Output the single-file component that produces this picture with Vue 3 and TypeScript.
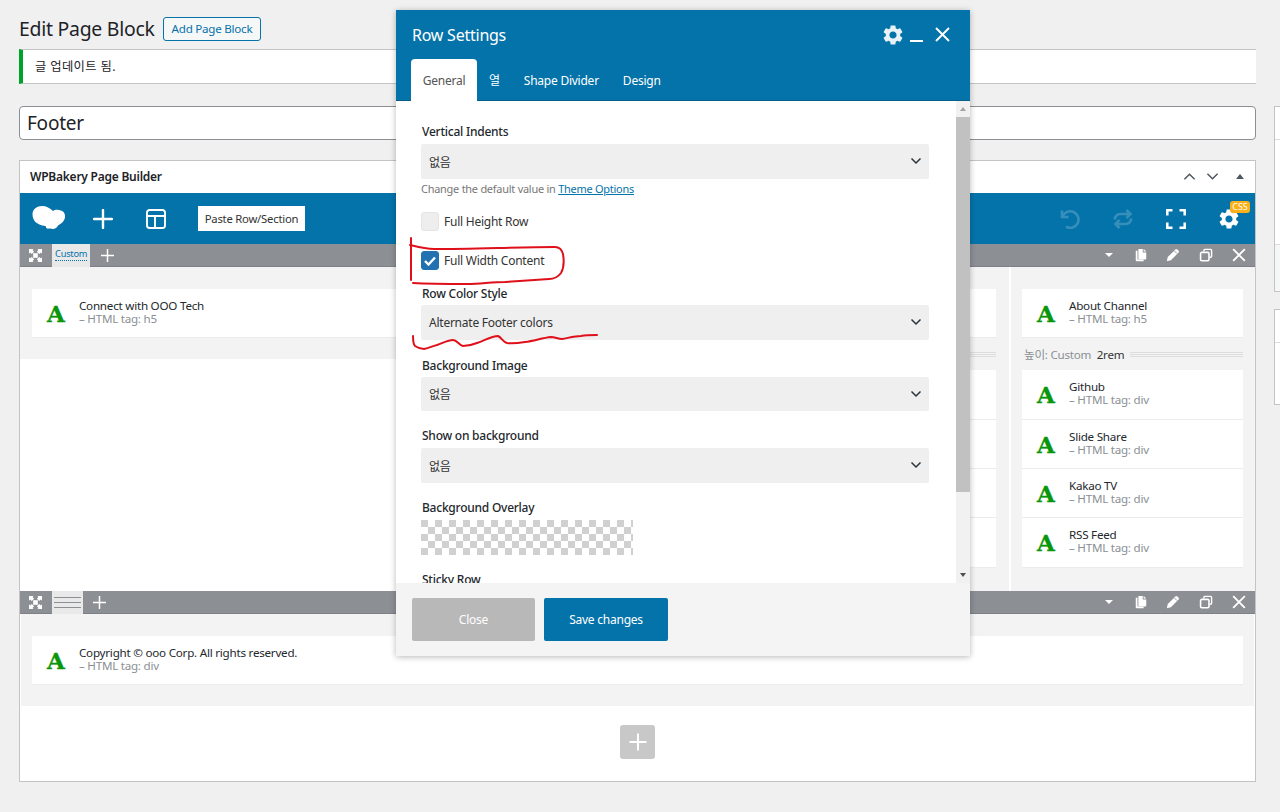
<script setup lang="ts">
interface Item { title: string; tag: string }
const rightTop: Item = { title: 'About Channel', tag: 'h5' }
const rightList: Item[] = [
  { title: 'Github', tag: 'div' },
  { title: 'Slide Share', tag: 'div' },
  { title: 'Kakao TV', tag: 'div' },
  { title: 'RSS Feed', tag: 'div' },
]
const rowActions = ['i-paste', 'i-pencil', 'i-clone', 'i-x']
const tabs = ['General', '열', 'Shape Divider', 'Design']
</script>

<template>
  <div class="page">
    <svg class="defs" aria-hidden="true">
      <symbol id="i-move" viewBox="0 0 14 14">
        <path fill="#fff" d="M0 0h5L3.800 1.200 5.500 3 3 5.500 1.200 3.800 0 5zM14 0v5l-1.200-1.200L11 5.500 8.500 3l1.700-1.800L9 0zM14 14H9l1.200-1.200L8.500 11 11 8.500l1.800 1.700L14 9zM0 14V9l1.200 1.200L3 8.500 5.500 11l-1.700 1.800L5 14z" />
        <path fill="#fff" d="M4.500 4.500h5v5h-5z" />
      </symbol>
      <symbol id="i-paste" viewBox="0 0 14 16">
        <path fill="#fff" d="M1 3h2v10h7v2H2a1 1 0 0 1-1-1z" />
        <path fill="#fff" d="M4 1h5v4h4v7a1 1 0 0 1-1 1H4z" />
        <path fill="#fff" d="M10 1l3 3h-3z" />
      </symbol>
      <symbol id="i-pencil" viewBox="0 0 16 16">
        <path fill="#fff" d="M10.800 1.600a1.500 1.500 0 0 1 2.100 0l1.500 1.500a1.500 1.500 0 0 1 0 2.100L5.600 14 1 15l1-4.600z" />
        <path fill="none" stroke="#8c8f94" d="m9.600 3.400 3 3" />
      </symbol>
      <symbol id="i-clone" viewBox="0 0 16 16">
        <path fill="none" stroke="#fff" stroke-width="1.600" d="M5.500 4V2.800c0-.7.500-1.200 1.200-1.200h6.500c.7 0 1.200.5 1.200 1.200v6.500c0 .7-.5 1.200-1.200 1.200H12" />
        <rect x="1.800" y="5" width="9.600" height="9.600" rx="1.400" fill="none" stroke="#fff" stroke-width="1.800" />
      </symbol>
      <symbol id="i-x" viewBox="0 0 12 12">
        <path fill="none" stroke="#fff" stroke-width="1.600" d="m1 1 10 10M11 1 1 11" />
      </symbol>
      <symbol id="i-gear" viewBox="0 0 24 24">
        <path fill="currentColor" d="M19.14 12.94c.04-.3.06-.61.06-.94 0-.32-.02-.64-.07-.94l2.03-1.58c.18-.14.23-.41.12-.61l-1.92-3.32c-.12-.22-.37-.29-.59-.22l-2.39.96c-.5-.38-1.03-.7-1.62-.94l-.36-2.54c-.04-.24-.24-.41-.48-.41h-3.84c-.24 0-.43.17-.47.41l-.36 2.54c-.59.24-1.13.57-1.62.94l-2.39-.96c-.22-.08-.47 0-.59.22L2.74 8.87c-.12.21-.08.47.12.61l2.03 1.58c-.05.3-.09.63-.09.94s.02.64.07.94l-2.03 1.58c-.18.14-.23.41-.12.61l1.92 3.32c.12.22.37.29.59.22l2.39-.96c.5.38 1.03.7 1.62.94l.36 2.54c.05.24.24.41.48.41h3.84c.24 0 .44-.17.47-.41l.36-2.54c.59-.24 1.13-.56 1.62-.94l2.39.96c.22.08.47 0 .59-.22l1.92-3.32c.12-.22.07-.47-.12-.61l-2.01-1.58zM12 15.6c-1.98 0-3.6-1.62-3.6-3.6s1.62-3.6 3.6-3.6 3.6 1.62 3.6 3.6-1.62 3.6-3.6 3.6z" />
      </symbol>
      <symbol id="i-chev" viewBox="0 0 12 8">
        <path fill="none" stroke="#2c3338" stroke-width="1.500" d="m1.500 1.500 4.500 4.500 4.500-4.500" />
      </symbol>
    </svg>

    <main class="main">
      <div class="heading">
        <h1 class="title">Edit Page Block</h1>
        <a class="add-btn">Add Page Block</a>
      </div>
      <div class="notice">글 업데이트 됨.</div>
      <div class="title-input">Footer</div>

      <section class="builder">
        <header class="box-head">
          <span class="box-title">WPBakery Page Builder</span>
          <span class="box-tools">
            <svg width="13" height="9" viewBox="0 0 14 9"><path fill="none" stroke="#50575e" stroke-width="1.600" d="m1.500 7.500 5.500-5.500 5.500 5.500" /></svg>
            <svg width="13" height="9" viewBox="0 0 14 9"><path fill="none" stroke="#50575e" stroke-width="1.600" d="m1.500 1.500 5.500 5.500 5.500-5.500" /></svg>
            <i class="tri-up"></i>
          </span>
        </header>

        <div class="toolbar">
          <svg class="logo" width="34" height="25" viewBox="0 0 34 25">
            <path fill="#fff" d="M.5 8C.5 3 5 0 10 0c4.500 0 8 2 11 5 2-1.500 5-1.500 8-.500 3 1 4.500 4 4 7-.500 3-3 6-7 8-1 2-3 3.500-5 3.500-1 0-2-.500-3-.500s-2 .300-3 0c-1-.300-1-2-1.500-2.500C4 19 .5 14 .5 8z" />
          </svg>
          <svg class="tool-plus" width="20" height="20" viewBox="0 0 20 20"><path stroke="#fff" stroke-width="2.400" stroke-linecap="round" d="M10 1v18M1 10h18" /></svg>
          <svg class="tool-layout" width="20" height="20" viewBox="0 0 20 20"><path fill="none" stroke="#fff" stroke-width="1.900" d="M3.500 1h13A2.500 2.500 0 0 1 19 3.500v13a2.500 2.500 0 0 1-2.500 2.500h-13A2.500 2.500 0 0 1 1 16.500v-13A2.500 2.500 0 0 1 3.500 1zM1 7h18M9 7v12" /></svg>
          <button class="paste-btn" type="button">Paste Row/Section</button>
          <span class="spacer"></span>
          <svg class="dim t-undo" width="20" height="20" viewBox="0 0 20 20"><path fill="none" stroke="#fff" stroke-width="2.600" d="M2 1.500V8h6.500" /><path fill="none" stroke="#fff" stroke-width="2.600" d="M2.500 7.500A8.300 8.300 0 1 1 6 17.700" /></svg>
          <svg class="dim t-redo" width="20" height="20" viewBox="0 0 20 20"><path fill="none" stroke="#fff" stroke-width="2.600" d="M1.800 10.500C1.800 7 4.300 5 7.500 5h9.500M13.500 1l4 4-4 4" /><path fill="none" stroke="#fff" stroke-width="2.600" d="M18.200 9.500c0 3.500-2.500 5.500-5.700 5.500H3M6.500 19l-4-4 4-4" /></svg>
          <svg class="t-full" width="20" height="20" viewBox="0 0 20 20"><path fill="none" stroke="#fff" stroke-width="2.500" d="M1.300 6.500V1.300h5.200M13.500 1.300h5.200v5.200M18.700 13.500v5.200h-5.200M6.500 18.700H1.300v-5.200" /></svg>
          <span class="t-gear">
            <svg width="24" height="24" class="gear-svg"><use href="#i-gear" /></svg>
            <b class="css-badge">CSS</b>
          </span>
        </div>

        <div class="row-bar">
          <svg class="move" width="13" height="13"><use href="#i-move" /></svg>
          <span class="layout-tab layout-custom"><span class="dotted">Custom</span></span>
          <svg class="bar-plus" width="13" height="13" viewBox="0 0 13 13"><path stroke="#fff" stroke-width="1.500" d="M6.500 0v13M0 6.500h13" /></svg>
          <span class="spacer"></span>
          <i class="tri-down"></i>
          <svg v-for="a in rowActions" :key="a" class="act" :class="a" width="14" height="14"><use :href="'#' + a" /></svg>
        </div>

        <div class="row-body">
          <div class="col col-a">
            <div class="col-inner">
              <div class="el">
                <span class="el-a">A</span>
                <div><div class="el-t">Connect with OOO Tech</div><div class="el-s">– HTML tag: h5</div></div>
              </div>
            </div>
          </div>
          <div class="col col-b">
            <div class="el"></div>
            <div class="sep"><span class="sep-text">높이: Custom&nbsp; <em>2rem</em></span><i class="sep-line"></i></div>
            <div v-for="n in 4" :key="n" class="el"></div>
          </div>
          <div class="col col-c">
            <div class="el">
              <span class="el-a">A</span>
              <div><div class="el-t">{{ rightTop.title }}</div><div class="el-s">– HTML tag: {{ rightTop.tag }}</div></div>
            </div>
            <div class="sep"><span class="sep-text">높이: Custom&nbsp; <em>2rem</em></span><i class="sep-line"></i></div>
            <div v-for="it in rightList" :key="it.title" class="el">
              <span class="el-a">A</span>
              <div><div class="el-t">{{ it.title }}</div><div class="el-s">– HTML tag: {{ it.tag }}</div></div>
            </div>
          </div>
        </div>

        <div class="row-bar row-bar-2">
          <svg class="move" width="13" height="13"><use href="#i-move" /></svg>
          <span class="layout-tab layout-lines"><i></i><i></i><i></i></span>
          <svg class="bar-plus" width="13" height="13" viewBox="0 0 13 13"><path stroke="#fff" stroke-width="1.500" d="M6.500 0v13M0 6.500h13" /></svg>
          <span class="spacer"></span>
          <i class="tri-down"></i>
          <svg v-for="a in rowActions" :key="a" class="act" :class="a" width="14" height="14"><use :href="'#' + a" /></svg>
        </div>

        <div class="row2-body">
          <div class="el">
            <span class="el-a">A</span>
            <div><div class="el-t">Copyright © ooo Corp. All rights reserved.</div><div class="el-s">– HTML tag: div</div></div>
          </div>
        </div>

        <div class="add-area">
          <span class="add-el"><svg width="18" height="18" viewBox="0 0 18 18"><path stroke="#fff" stroke-width="2" d="M9 .5v17M.5 9h17" /></svg></span>
        </div>
      </section>
    </main>

    <aside class="side">
      <div class="side-box side-1"><i></i><i></i><i></i></div>
      <div class="side-box side-2"><i></i><i></i></div>
    </aside>

    <div class="modal">
      <header class="m-head">
        <div class="m-top">
          <span class="m-title">Row Settings</span>
          <span class="m-icons">
            <svg width="24" height="24" class="m-gear"><use href="#i-gear" /></svg>
            <i class="m-min"></i>
            <svg width="15" height="15" viewBox="0 0 15 15"><path fill="none" stroke="#fff" stroke-width="1.900" d="m1 1 13 13M14 1 1 14" /></svg>
          </span>
        </div>
        <nav class="m-tabs">
          <a v-for="(t, i) in tabs" :key="t" class="m-tab" :class="{ on: i === 0 }">{{ t }}</a>
        </nav>
      </header>

      <div class="m-mid">
        <div class="m-body">
          <label class="lab lab-1">Vertical Indents</label>
          <div class="sel"><span class="ko">없음</span><svg width="12" height="8"><use href="#i-chev" /></svg></div>
          <p class="help">Change the default value in <a>Theme Options</a></p>
          <div class="chk chk-1"><i class="box"></i>Full Height Row</div>
          <div class="chk chk-2">
            <i class="box checked"><svg width="12" height="10" viewBox="0 0 12 10"><path fill="none" stroke="#fff" stroke-width="2.400" d="m1 5 3.500 3.500L11 1.500" /></svg></i>Full Width Content
          </div>
          <label class="lab lab-2">Row Color Style</label>
          <div class="sel"><span>Alternate Footer colors</span><svg width="12" height="8"><use href="#i-chev" /></svg></div>
          <label class="lab lab-bg">Background Image</label>
          <div class="sel"><span class="ko">없음</span><svg width="12" height="8"><use href="#i-chev" /></svg></div>
          <label class="lab lab-3">Show on background</label>
          <div class="sel"><span class="ko">없음</span><svg width="12" height="8"><use href="#i-chev" /></svg></div>
          <label class="lab lab-3">Background Overlay</label>
          <div class="checker"></div>
          <label class="lab lab-3 lab-last">Sticky Row</label>
        </div>
        <div class="scroll">
          <i class="arrow-up"></i>
          <i class="thumb"></i>
          <span class="spacer"></span>
          <i class="arrow-down"></i>
        </div>
      </div>

      <footer class="m-foot">
        <button class="btn btn-close" type="button">Close</button>
        <button class="btn btn-save" type="button">Save changes</button>
      </footer>
    </div>

    <svg class="ink" width="1280" height="812" viewBox="0 0 1280 812" fill="none" stroke="#e0101a" stroke-width="2" stroke-linecap="round" stroke-linejoin="round">
      <path d="M411 238v42" />
      <path d="M410 245c8 2 15 4 24 4 40 0 85-2 121-2 4 0 7 3 8 7 1 6 1 14-2 19-3 4-8 6-12 6-14 1-30 2-44 3-13 0-25 2-37 2-20 0-38 0-55-1" />
      <path d="M413 336c0 4 0 8 2 10 3 2 6 3 9 3 5-1 9-3 13-4 6-2 11-5 16-5 4 0 6 5 10 6 5 0 9-1 14-3 7-2 14-7 21-7 3 1 5 6 9 7 6 1 12 0 18-1 9-1 17-4 26-5 4 0 7 2 11 2 6-1 13-3 19-3 5-1 11-1 16-1" />
    </svg>
  </div>
</template>

<style>
html, body { margin: 0; background: #f0f0f1; }
</style>

<style scoped>
.page {
  position: relative;
  width: 1280px;
  height: 812px;
  overflow: hidden;
  background: #f0f0f1;
  color: #1d2327;
  font-family: "Noto Sans", "Noto Sans CJK KR", sans-serif;
  font-size: 12px;
  letter-spacing: -0.02em;
  display: flex;
  box-sizing: border-box;
  padding-left: 19px;
}
.defs { position: absolute; width: 0; height: 0; }
.spacer { flex: 1; }

.main { width: 1237px; flex: none; display: flex; flex-direction: column; }
.heading { display: flex; align-items: center; height: 24px; margin-top: 17px; }
.title { margin: 0; font-size: 19.400px; font-weight: 400; line-height: 24px; width: 144px; white-space: nowrap; }
.add-btn {
  box-sizing: border-box; width: 98px; height: 24px; border: 1px solid #0473aa; border-radius: 3px;
  background: #f6f7f7; color: #0473aa; text-align: center; line-height: 22px; font-size: 11.600px;
}
.notice {
  box-sizing: border-box; height: 35px; margin-top: 8px; padding-left: 12px; line-height: 33px;
  background: #fff; border: 1px solid #c3c4c7; border-left: 4px solid #00a32a; border-right: 0;
  font-size: 12.300px; letter-spacing: 0.03em;
}
.title-input {
  box-sizing: border-box; height: 33.500px; margin-top: 22px; padding-left: 7px; line-height: 33px;
  background: #fff; border: 1px solid #8c8f94; border-radius: 4px; font-size: 19px;
}

.builder {
  box-sizing: border-box; height: 621.500px; margin-top: 20.500px; background: #fff;
  border: 1px solid #c3c4c7; display: flex; flex-direction: column;
}
.box-head { height: 32px; flex: none; display: flex; align-items: center; justify-content: space-between; padding: 0 11px 1px 10px; box-sizing: border-box; }
.box-title { font-weight: 600; font-size: 12px; }
.box-tools { display: flex; align-items: center; gap: 10px; }
.tri-up { width: 0; height: 0; margin-left: 7px; border: 4px solid transparent; border-top: 0; border-bottom: 5px solid #50575e; }

.toolbar { height: 51px; flex: none; background: #0473aa; display: flex; align-items: center; padding-left: 12px; }
.tool-plus { margin-left: 27px; }
.tool-layout { margin-left: 33px; }
.paste-btn {
  box-sizing: border-box; width: 107px; height: 25px; margin-left: 32px; padding: 0; border: 0; background: #fff;
  color: #333; font: inherit; font-size: 11.300px; letter-spacing: -0.02em;
}
.dim { opacity: 0.2; }
.t-undo { margin-right: 33px; }
.t-redo { margin-right: 33px; }
.t-full { margin-right: 31px; }
.t-gear { position: relative; display: block; width: 24px; height: 24px; margin-right: 14px; color: #fff; }
.gear-svg { display: block; }
.css-badge {
  position: absolute; top: -6px; left: 13px; width: 20px; height: 12px; border-radius: 3px;
  background: #fbb017; color: #fff; font-size: 9px; font-weight: 400; line-height: 12px; text-align: center; letter-spacing: 0;
}

.row-bar {
  box-sizing: border-box; height: 23px; flex: none; background: #8c8f94; display: flex; align-items: center;
  border-bottom: 1px solid #7d8085;
}
.move { margin-left: 9px; }
.layout-tab { box-sizing: border-box; height: 23px; background: #e9e9e9; }
.layout-custom { width: 38px; padding: 3px 0 0 3px; font-size: 9.300px; color: #0473aa; line-height: 14px; margin-left: 10px; }
.dotted { border-bottom: 1px dotted #0473aa; }
.layout-lines { width: 31px; padding: 6px 2px 0; display: flex; flex-direction: column; gap: 4px; margin-left: 10px; }
.layout-lines i { height: 1px; background: #8c8f94; display: block; }
.bar-plus { margin-left: 11px; }
.row-bar-2 .bar-plus { margin-left: 10px; }
.tri-down { width: 0; height: 0; margin-right: 21px; border: 4px solid transparent; border-bottom: 0; border-top: 4px solid #fff; }
.act { margin-right: 19px; }
.act.i-paste { margin-right: 18px; }
.act.i-x { margin-right: 9px; }

.row-body { height: 324px; flex: none; display: flex; background: #fff; }
.col { box-sizing: border-box; padding: 22px 12px 0; }
.col-a { width: 494px; }
.col-a .col-inner { background: #f3f3f3; margin: -22px -12px 0 -12px; padding: 22px 12px 21px; }
.col-b { width: 495px; background: #f3f3f3; padding-right: 13px; }
.col-c { flex: 1; background: #f3f3f3; margin-left: 2px; padding-right: 12px; padding-left: 11px; }
.el {
  box-sizing: border-box; height: 49.330px; background: #fff; border-bottom: 1px solid #ebebeb;
  display: flex; align-items: center; padding-left: 15px;
}
.el-a {
  width: 32px; flex: none; font-family: "DejaVu Serif", serif; font-weight: 700; font-size: 23px; line-height: 26px;
  color: #0a960a; margin-top: 2px; letter-spacing: 0; -webkit-text-stroke: 0.3px #0a960a;
}
.el-t { font-size: 11.650px; line-height: 13px; color: #23282d; margin-top: -2px; }
.el-s { font-size: 11.600px; line-height: 13px; color: #8a8f94; }
.sep { height: 32px; display: flex; align-items: center; gap: 6px; }
.sep-text { color: #8a8f94; font-size: 11.600px; padding-left: 2px; white-space: nowrap; }
.sep-text em { font-style: normal; color: #333; }
.sep-line {
  flex: 1; height: 6px;
  background-image: repeating-linear-gradient(0deg, #ddd 0 1px, transparent 1px 2px);
}

.row2-body { height: 92px; flex: none; box-sizing: border-box; margin: 0 1px; padding: 22px 11px 0 11px; background: #f3f3f3; }
.add-area { flex: 1; display: flex; justify-content: center; padding-top: 19px; }
.add-el {
  box-sizing: border-box; width: 35px; height: 34px; border-radius: 3px; background: #c8c8c8;
  display: flex; align-items: center; justify-content: center;
}

.side { flex: 1; margin-left: 18px; }
.side-box { box-sizing: border-box; background: #fff; border: 1px solid #c3c4c7; border-right: 0; }
.side-box i { display: block; box-sizing: border-box; }
.side-1 { margin-top: 106px; height: 186px; }
.side-1 i:nth-child(1) { height: 33px; border-bottom: 1px solid #dcdcde; }
.side-1 i:nth-child(2) { height: 105px; border-bottom: 1px solid #dcdcde; }
.side-1 i:nth-child(3) { height: 46px; background: #f6f7f7; }
.side-2 { margin-top: 17px; height: 96px; }
.side-2 i:first-child { height: 33px; border-bottom: 1px solid #dcdcde; }

.modal {
  position: absolute; left: 396px; top: 10px; width: 574px; height: 646px; background: #fff;
  box-shadow: 0 1px 6px rgba(0, 0, 0, 0.28); display: flex; flex-direction: column; z-index: 2;
}
.m-head { height: 91px; flex: none; box-sizing: border-box; background: #0473aa; padding-left: 15px; display: flex; flex-direction: column; border-bottom: 1px solid #045f8d; }
.m-top { height: 49px; display: flex; align-items: center; justify-content: space-between; padding-right: 20px; flex: none; }
.m-title { color: #fff; font-size: 16px; margin-left: 1px; letter-spacing: -0.015em; }
.m-icons { display: flex; align-items: center; gap: 12px; color: #fff; }
.m-gear { color: #e8f2f7; margin-right: -7px; }
.m-min { width: 13px; height: 2px; background: #fff; margin-top: 12px; }
.m-tabs { display: flex; height: 42px; flex: none; }
.m-tab { box-sizing: border-box; color: #fff; line-height: 44px; padding: 0 12px; font-size: 12px; }
.m-tab.on { background: #fff; color: #555; border-radius: 4px 4px 0 0; width: 66px; text-align: center; padding: 0; }

.m-mid { flex: 1; min-height: 0; display: flex; }
.m-body { flex: 1; min-width: 0; overflow: hidden; box-sizing: border-box; padding: 23px 27px 0 25px; }
.lab { display: block; font-size: 12px; font-weight: 500; line-height: 16px; color: #23282d; padding-left: 1px; }
.lab-1 { margin-bottom: 1px; }
.lab-2 { margin-top: 16px; margin-bottom: -1px; }
.lab-bg { margin-top: 18px; margin-bottom: -1px; }
.lab-3 { margin-top: 17px; }
.sel {
  box-sizing: border-box; height: 34.500px; margin-top: 4px; padding: 0 7px 0 8px; background: #efefef; border-radius: 2px;
  display: flex; align-items: center; justify-content: space-between; color: #333; font-size: 12px;
}
.ko { font-family: "Noto Sans CJK KR", sans-serif; }
.help { margin: 2.500px 0 0; font-size: 10.950px; line-height: 16px; color: #777; }
.help a { color: #0473aa; text-decoration: underline; }
.chk { display: flex; align-items: center; gap: 5px; height: 19px; color: #333; font-size: 12px; }
.chk-1 { margin-top: 15px; }
.chk-2 { margin-top: 20px; }
.box { box-sizing: border-box; width: 18px; height: 19px; border-radius: 3px; background: #eee; border: 1px solid #e4e4e4; display: flex; align-items: center; justify-content: center; }
.box.checked { background: #2271b1; border-color: #2271b1; }
.checker {
  width: 212px; height: 35px; margin-top: 4px;
  background-color: #fff;
  background-image: conic-gradient(#d0d0d0 25%, #fff 0 50%, #d0d0d0 0 75%, #fff 0);
  background-size: 14px 14px;
  background-position: 7px 0;
}

.scroll { width: 14px; flex: none; background: #f1f1f1; display: flex; flex-direction: column; align-items: center; }
.arrow-up { margin-top: 6px; width: 0; height: 0; border: 3.500px solid transparent; border-top: 0; border-bottom: 4px solid #a3a3a3; }
.thumb { width: 100%; height: 375px; margin-top: 6px; background: #c1c1c1; }
.arrow-down { margin-bottom: 6px; width: 0; height: 0; border: 3.500px solid transparent; border-bottom: 0; border-top: 4px solid #505050; }

.m-foot { height: 73px; flex: none; box-sizing: border-box; background: #f4f4f4; padding: 15px 0 0 16px; display: flex; align-items: flex-start; gap: 9px; }
.btn { box-sizing: border-box; height: 43px; border: 0; border-radius: 2px; color: #fff; font: inherit; font-size: 12px; letter-spacing: -0.02em; }
.btn-close { width: 123px; background: #b8b8b8; }
.btn-save { width: 124px; background: #0473aa; }

.ink { position: absolute; left: 0; top: 0; z-index: 3; pointer-events: none; }
</style>
